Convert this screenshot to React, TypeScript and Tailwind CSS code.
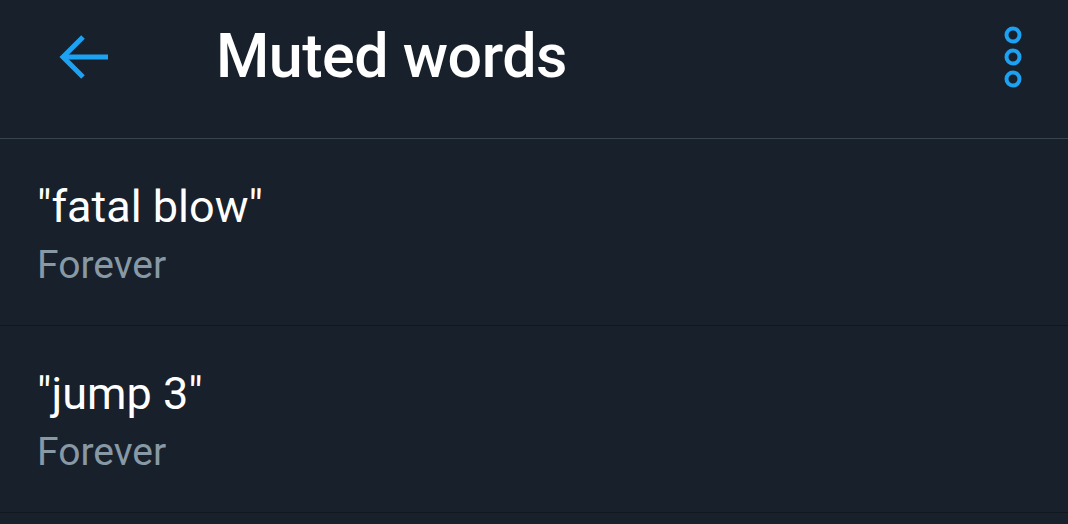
const words = [
  { text: '"fatal blow"', duration: 'Forever' },
  { text: '"jump 3"', duration: 'Forever' },
];

export default function App() {
  return (
    <div
      className="w-[1068px] h-[524px] overflow-hidden bg-[#17202b]"
      style={{ fontFamily: 'Roboto, "Noto Sans", sans-serif' }}
    >
      <header className="flex h-[139px] items-center border-b border-[#38444d] pb-[25px]">
        <button className="ml-[58px] flex h-[52px] w-[52px] items-center justify-center text-[#1da1f2]">
          <svg width="52" height="46" viewBox="0 0 52 46" fill="none" stroke="currentColor" strokeWidth="5">
            <path d="M50 23H5" />
            <path d="M25 3L5 23l20 20" />
          </svg>
        </button>
        <h1 className="ml-[106px] flex-1 text-[61px] font-medium leading-none tracking-[-0.5px] text-white">
          Muted words
        </h1>
        <button className="mr-[40px] flex w-[30px] flex-col items-center gap-[4px] text-[#1da1f2]">
          {[0, 1, 2].map((i) => (
            <svg key={i} width="18" height="18" viewBox="0 0 18 18" fill="none" stroke="currentColor" strokeWidth="4">
              <circle cx="9" cy="9" r="6.5" />
            </svg>
          ))}
        </button>
      </header>

      {words.map((w) => (
        <div key={w.text} className="flex h-[187px] flex-col justify-center border-b border-[#10171e] pl-[37px] pt-[8px]">
          <div className="text-[45px] leading-[58px] text-white">{w.text}</div>
          <div className="text-[39px] leading-[58px] text-[#8899a6]">{w.duration}</div>
        </div>
      ))}
    </div>
  );
}
